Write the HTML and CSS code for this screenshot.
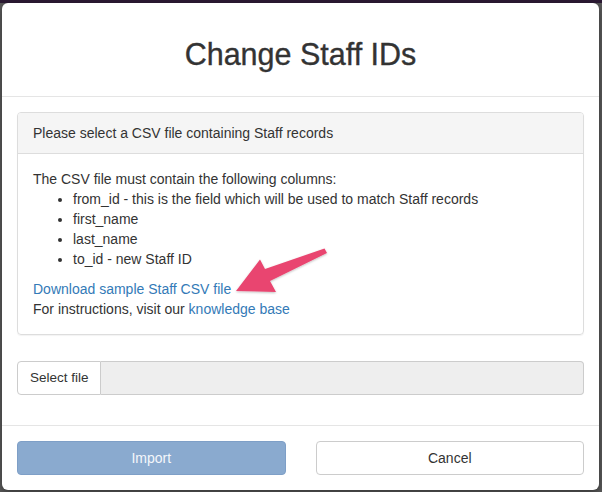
FILE: index.html
```html
<!DOCTYPE html>
<html>
<head>
<meta charset="utf-8">
<link rel="stylesheet" href="styles.css">
</head>
<body>
<div class="modal">
  <div class="modal-header">
    <h4 class="modal-title">Change Staff IDs</h4>
  </div>
  <div class="modal-body">
    <div class="panel">
      <div class="panel-heading">Please select a CSV file containing Staff records</div>
      <div class="panel-body">
        <p class="intro">The CSV file must contain the following columns:</p>
        <ul class="cols">
          <li>from_id - this is the field which will be used to match Staff records</li>
          <li>first_name</li>
          <li>last_name</li>
          <li>to_id - new Staff ID</li>
        </ul>
        <a class="link" href="#">Download sample Staff CSV file</a>
        <p class="instr">For instructions, visit our <a class="link" href="#">knowledge base</a></p>
      </div>
    </div>
    <div class="input-group">
      <span class="btn-file">Select file</span>
      <span class="file-field"></span>
    </div>
  </div>
  <div class="modal-footer">
    <button class="btn btn-import" disabled>Import</button>
    <button class="btn btn-cancel">Cancel</button>
  </div>
</div>
<svg class="annotation" width="602" height="492" viewBox="0 0 602 492">
  <defs>
    <filter id="sh" x="-20%" y="-20%" width="140%" height="140%">
      <feDropShadow dx="0" dy="1" stdDeviation="1" flood-color="#000" flood-opacity="0.25"/>
    </filter>
  </defs>
  <polygon filter="url(#sh)" fill="#e9456f" points="236,291 260,259.5 265,269 324.5,248.5 327,253 270,281 276,292"/>
</svg>
</body>
</html>
```
FILE: styles.css
```css
html, body {
  margin: 0;
  padding: 0;
}
body {
  width: 602px;
  height: 492px;
  position: relative;
  overflow: hidden;
  background: linear-gradient(#2c1a34 0, #2c1a34 3px, #5a5a5a 3px, #5a5a5a 100%);
  font-family: "Liberation Sans", Arial, Helvetica, sans-serif;
  font-size: 14px;
  line-height: 20px;
  color: #333;
}
.modal {
  margin: 3px 0 0 2px;
  width: 597px;
  background: #fff;
  border-radius: 6px;
  box-shadow: 0 3px 9px rgba(0, 0, 0, 0.4);
  overflow: hidden;
}
.modal-header {
  padding: 35px 15px 25px;
  border-bottom: 1px solid #e5e5e5;
  text-align: center;
}
.modal-title {
  margin: 0;
  font-size: 30.5px;
  line-height: 33px;
  font-weight: normal;
  color: #333;
  -webkit-text-stroke: 0.35px #333;
}
.modal-body {
  padding: 15px;
}
.panel {
  border: 1px solid #ddd;
  border-radius: 4px;
  box-shadow: 0 1px 1px rgba(0, 0, 0, 0.05);
}
.panel-heading {
  padding: 10px 15px;
  background: #f5f5f5;
  border-bottom: 1px solid #ddd;
  border-radius: 3px 3px 0 0;
}
.panel-body {
  padding: 15px;
}
.intro {
  margin: 0;
}
.cols {
  margin: 0 0 10px;
  padding-left: 40px;
}
.link {
  color: #337ab7;
  text-decoration: none;
}
.instr {
  margin: 0;
}
.input-group {
  margin: 26px 0 15px;
  display: flex;
  height: 34px;
}
.btn-file {
  display: flex;
  align-items: center;
  padding: 0 11px 0 12px;
  border: 1px solid #ccc;
  border-radius: 4px 0 0 4px;
  background: #fff;
  font-size: 13.5px;
  color: #333;
}
.file-field {
  flex: 1;
  background: #eee;
  border: 1px solid #ccc;
  border-left: 0;
  border-radius: 0 4px 4px 0;
}
.modal-footer {
  border-top: 1px solid #e5e5e5;
  padding: 15px;
  display: grid;
  grid-template-columns: 1fr 1fr;
  column-gap: 30px;
}
.btn {
  height: 34px;
  font-family: inherit;
  font-size: 14px;
  border-radius: 4px;
  border: 1px solid #ccc;
  padding: 0 12px;
}
.btn-import {
  background: #8aaacf;
  border-color: #7e9fc7;
  color: #f4f7fb;
}
.btn-cancel {
  background: #fff;
  color: #333;
}
.annotation {
  position: absolute;
  left: 0;
  top: 0;
  pointer-events: none;
}
```
